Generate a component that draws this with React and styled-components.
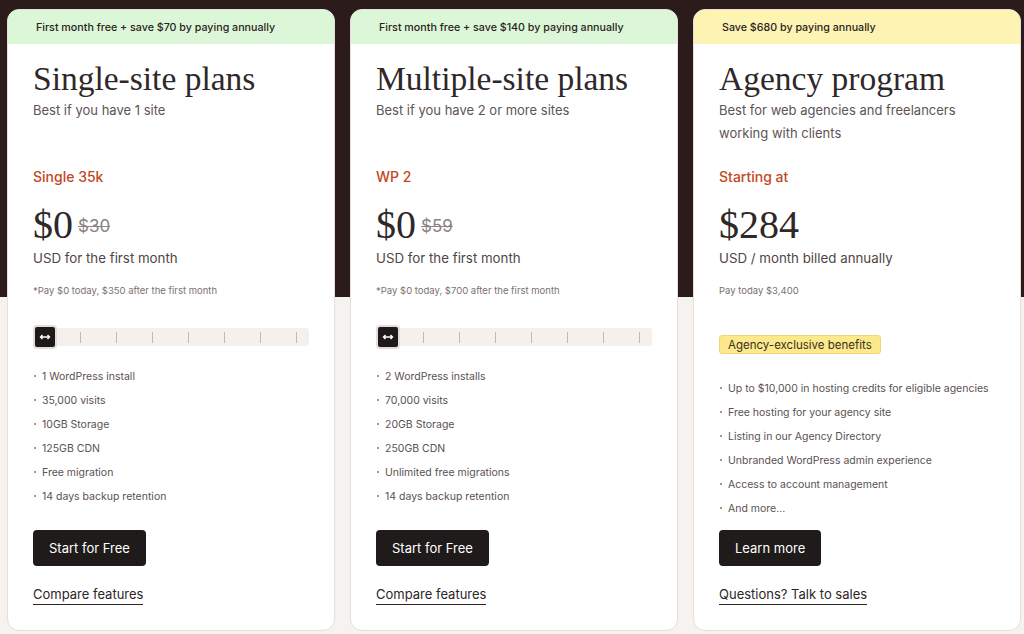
import styled, { createGlobalStyle } from 'styled-components';

const GlobalStyle = createGlobalStyle`
    body {
        margin: 0;
        background: #f6f2ef;
        font-family: 'Inter', 'Liberation Sans', sans-serif;
    }
`;

const Page = styled.main`
    width: 1024px;
    height: 634px;
    overflow: hidden;
    box-sizing: border-box;
    padding: 9px 0 0 7px;
    background: linear-gradient(#2c1b1b 0, #2c1b1b 297px, #f6f2ef 297px);
`;

const CardsRow = styled.div`
    display: flex;
    gap: 15px;
`;

const Card = styled.section`
    width: 328px;
    height: 622px;
    box-sizing: border-box;
    display: flex;
    flex-direction: column;
    background: #fff;
    border: 1px solid #e6dfdb;
    border-radius: 12px;
    overflow: hidden;
`;

const Banner = styled.div`
    height: 34px;
    flex-shrink: 0;
    display: flex;
    align-items: center;
    padding: 0 28px;
    background: ${p => (p.$tone === 'yellow' ? '#fdf4b3' : '#dcf7d7')};
    font-size: 10.7px;
    font-weight: 500;
    color: #2b2222;
`;

const Body = styled.div`
    flex: 1;
    display: flex;
    flex-direction: column;
    padding: 15px 25px 25px;
`;

const Title = styled.h2`
    margin: 0;
    font-family: 'Liberation Serif', serif;
    font-weight: 400;
    font-size: 33.5px;
    line-height: 40px;
    color: #2f2828;
`;

const Subtitle = styled.p`
    margin: 0 0 22px;
    min-height: 46px;
    font-size: 13px;
    line-height: 23px;
    color: #5d5454;
`;

const PlanLabel = styled.div`
    font-size: 14px;
    font-weight: 500;
    line-height: 20px;
    color: #c2481c;
`;

const PriceRow = styled.div`
    display: flex;
    align-items: center;
    gap: 5px;
    margin-top: 16px;
    height: 44px;
`;

const Price = styled.span`
    font-family: 'Liberation Serif', serif;
    font-size: 40px;
    line-height: 44px;
    color: #2f2828;
`;

const OldPrice = styled.s`
    margin-top: 2px;
    font-size: 17px;
    color: #8b8282;
`;

const PriceNote = styled.div`
    margin-top: 1px;
    font-size: 13.3px;
    line-height: 20px;
    color: #4f4646;
`;

const PayNote = styled.div`
    margin-top: 15px;
    font-size: 9.5px;
    line-height: 16px;
    color: #7a7171;
`;

const Track = styled.div`
    margin-top: 29px;
    height: 18px;
    display: flex;
    align-items: center;
    background: #f6f0ed;
    border-radius: 3px;
`;

const Thumb = styled.div`
    width: 24px;
    height: 24px;
    flex-shrink: 0;
    box-sizing: border-box;
    border: 2px solid #e6ddd8;
    border-radius: 4px;
    background: #1f1a1a;
    display: flex;
    align-items: center;
    justify-content: center;
`;

const Ticks = styled.div`
    margin-left: 23px;
    width: 217px;
    display: flex;
    justify-content: space-between;
`;

const Tick = styled.span`
    width: 1px;
    height: 11px;
    background: #c4b7b2;
`;

const Badge = styled.div`
    align-self: flex-start;
    margin-top: 36px;
    height: 19px;
    padding: 0 8px;
    display: flex;
    align-items: center;
    box-sizing: border-box;
    background: #fbe98c;
    border: 1px solid #f0d66c;
    border-radius: 3px;
    font-size: 11.5px;
    color: #3a2f22;
`;

const Features = styled.ul`
    list-style: none;
    margin: ${p => p.$gap}px 0 0;
    padding: 0;
`;

const Feature = styled.li`
    display: flex;
    align-items: center;
    gap: 6px;
    height: 24px;
    font-size: 10.5px;
    color: #5a5151;

    &::before {
        content: '';
        width: 2px;
        height: 2px;
        margin-left: 1px;
        background: #a8948a;
    }
`;

const Actions = styled.div`
    margin-top: auto;
    display: flex;
    flex-direction: column;
    align-items: flex-start;
    gap: 18px;
`;

const Button = styled.button`
    height: 36px;
    padding: 0 16px;
    border: none;
    border-radius: 4px;
    background: #1f1b1b;
    color: #fff;
    font-family: inherit;
    font-size: 13px;
    cursor: pointer;
`;

const TextLink = styled.a`
    font-size: 13px;
    line-height: 20px;
    color: #2d2626;
    text-decoration: none;
    border-bottom: 1.5px solid #2d2626;
`;

function Slider() {
    return (
        <Track>
            <Thumb>
                <svg width="12" height="8" viewBox="0 0 12 8" fill="none" stroke="#fff" strokeWidth="1.4">
                    <path d="M1.5 4h9M3.5 2L1.5 4l2 2M8.5 2l2 2-2 2" />
                </svg>
            </Thumb>
            <Ticks>
                {Array.from({ length: 7 }).map((_, i) => <Tick key={i} />)}
            </Ticks>
        </Track>
    );
}

const plans = [
    {
        banner: 'First month free + save $70 by paying annually',
        title: 'Single-site plans',
        subtitle: 'Best if you have 1 site',
        label: 'Single 35k',
        price: '$0',
        old: '$30',
        note: 'USD for the first month',
        pay: '*Pay $0 today, $350 after the first month',
        features: ['1 WordPress install', '35,000 visits', '10GB Storage', '125GB CDN', 'Free migration', '14 days backup retention'],
        cta: 'Start for Free',
        link: 'Compare features',
    },
    {
        banner: 'First month free + save $140 by paying annually',
        title: 'Multiple-site plans',
        subtitle: 'Best if you have 2 or more sites',
        label: 'WP 2',
        price: '$0',
        old: '$59',
        note: 'USD for the first month',
        pay: '*Pay $0 today, $700 after the first month',
        features: ['2 WordPress installs', '70,000 visits', '20GB Storage', '250GB CDN', 'Unlimited free migrations', '14 days backup retention'],
        cta: 'Start for Free',
        link: 'Compare features',
    },
    {
        tone: 'yellow',
        banner: 'Save $680 by paying annually',
        title: 'Agency program',
        subtitle: 'Best for web agencies and freelancers working with clients',
        label: 'Starting at',
        price: '$284',
        note: 'USD / month billed annually',
        pay: 'Pay today $3,400',
        badge: 'Agency-exclusive benefits',
        features: [
            'Up to $10,000 in hosting credits for eligible agencies',
            'Free hosting for your agency site',
            'Listing in our Agency Directory',
            'Unbranded WordPress admin experience',
            'Access to account management',
            'And more...',
        ],
        cta: 'Learn more',
        link: 'Questions? Talk to sales',
    },
];

export default function App() {
    return (
        <Page>
            <GlobalStyle />
            <CardsRow>
                {plans.map(plan => (
                    <Card key={plan.title}>
                        <Banner $tone={plan.tone}>{plan.banner}</Banner>
                        <Body>
                            <Title>{plan.title}</Title>
                            <Subtitle>{plan.subtitle}</Subtitle>
                            <PlanLabel>{plan.label}</PlanLabel>
                            <PriceRow>
                                <Price>{plan.price}</Price>
                                {plan.old && <OldPrice>{plan.old}</OldPrice>}
                            </PriceRow>
                            <PriceNote>{plan.note}</PriceNote>
                            <PayNote>{plan.pay}</PayNote>
                            {plan.badge ? <Badge>{plan.badge}</Badge> : <Slider />}
                            <Features $gap={plan.badge ? 22 : 18}>
                                {plan.features.map(f => <Feature key={f}>{f}</Feature>)}
                            </Features>
                            <Actions>
                                <Button>{plan.cta}</Button>
                                <TextLink href="#">{plan.link}</TextLink>
                            </Actions>
                        </Body>
                    </Card>
                ))}
            </CardsRow>
        </Page>
    );
}
